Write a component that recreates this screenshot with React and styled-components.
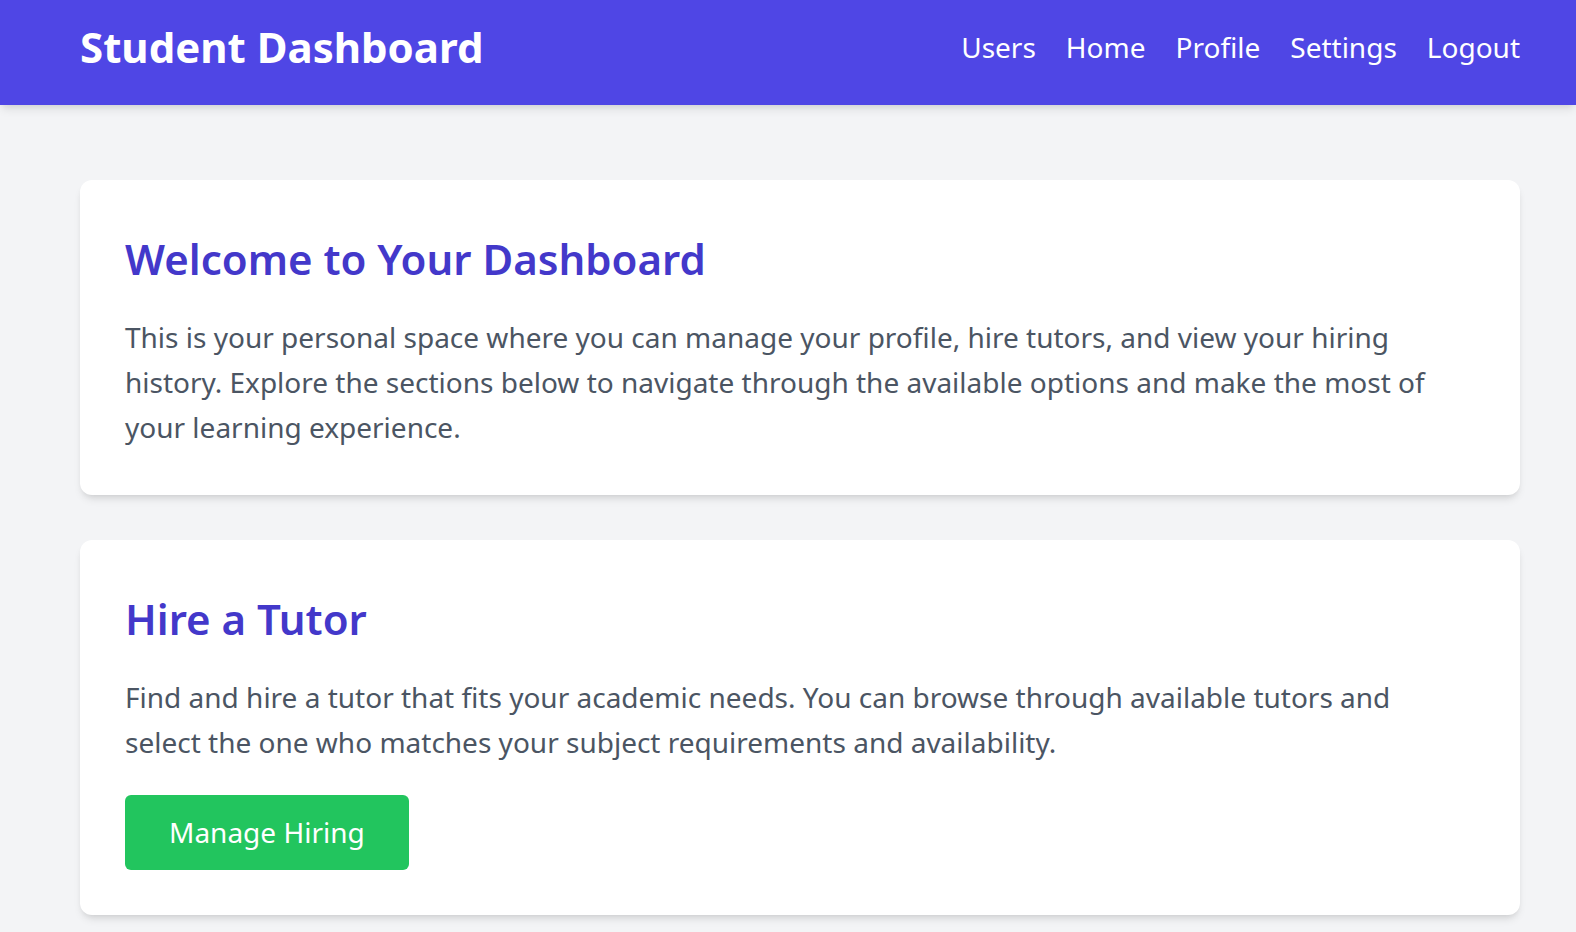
import React from 'react'
import styled, { createGlobalStyle } from 'styled-components'

const GlobalStyle = createGlobalStyle`
  body {
    margin: 0;
    background: #f3f4f6;
    font-family: 'Noto Sans', 'Open Sans', sans-serif;
    color: #4b5563;
  }
  * { box-sizing: border-box; }
`

const Header = styled.header`
  height: 105px;
  padding: 0 56px 12px 80px;
  display: flex;
  align-items: center;
  justify-content: space-between;
  background: #4f46e5;
  box-shadow: 0 6px 9px -2px rgba(0, 0, 0, .1), 0 3px 6px -3px rgba(0, 0, 0, .08);
`

const Brand = styled.h1`
  margin: 0;
  font-size: 42px;
  font-weight: 700;
  line-height: 57px;
  color: #fff;
`

const Nav = styled.nav`
  display: flex;
  gap: 30px;
`

const NavLink = styled.a`
  font-size: 28px;
  line-height: 38px;
  color: #fff;
  text-decoration: none;
  cursor: pointer;
`

const Main = styled.main`
  padding: 75px 56px 45px 80px;
  display: flex;
  flex-direction: column;
  gap: 45px;
`

const Card = styled.section`
  background: #fff;
  border-radius: 12px;
  padding: 45px;
  box-shadow: 0 6px 9px -2px rgba(0, 0, 0, .1), 0 3px 6px -3px rgba(0, 0, 0, .1);
`

const Title = styled.h2`
  margin: 0 0 22px;
  font-size: 42px;
  font-weight: 600;
  line-height: 68px;
  color: #4338ca;
`

const Text = styled.p`
  margin: 0;
  max-width: 1325px;
  font-size: 28px;
  line-height: 45px;
  color: #4b5563;
`

const Button = styled.button`
  margin-top: 30px;
  padding: 15px 44px;
  border: 0;
  border-radius: 6px;
  background: #22c55e;
  color: #fff;
  font-family: inherit;
  font-size: 28px;
  line-height: 45px;
  cursor: pointer;
`

const links = ['Users', 'Home', 'Profile', 'Settings', 'Logout']

export default function App() {
  return (
    <>
      <GlobalStyle />
      <Header>
        <Brand>Student Dashboard</Brand>
        <Nav>
          {links.map(l => <NavLink key={l}>{l}</NavLink>)}
        </Nav>
      </Header>
      <Main>
        <Card>
          <Title>Welcome to Your Dashboard</Title>
          <Text>
            This is your personal space where you can manage your profile, hire tutors, and view your hiring
            history. Explore the sections below to navigate through the available options and make the most of
            your learning experience.
          </Text>
        </Card>
        <Card>
          <Title>Hire a Tutor</Title>
          <Text>
            Find and hire a tutor that fits your academic needs. You can browse through available tutors and
            select the one who matches your subject requirements and availability.
          </Text>
          <Button>Manage Hiring</Button>
        </Card>
      </Main>
    </>
  )
}
